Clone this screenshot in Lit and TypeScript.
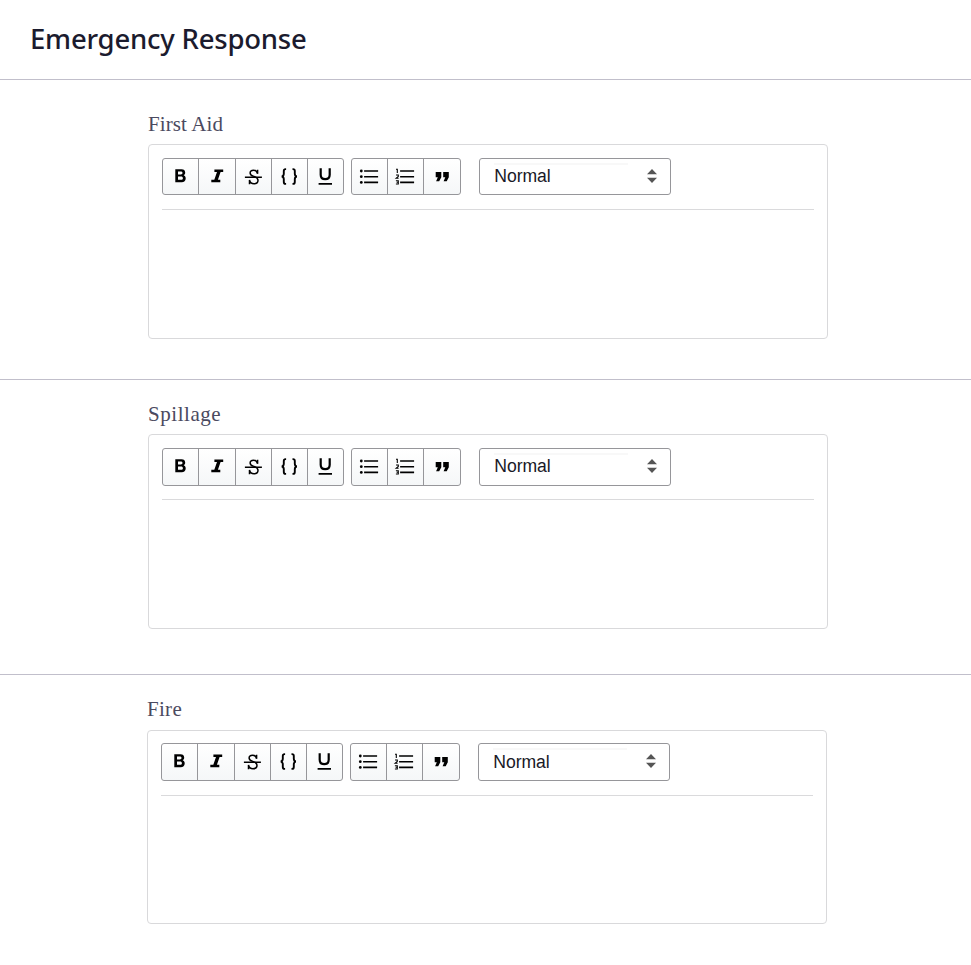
import { LitElement, html, css, svg } from "lit";
import { customElement, property } from "lit/decorators.js";

// Each glyph is drawn on a 36x36 canvas, the size of a toolbar button.
const icons: Record<string, unknown> = {
  bold: svg`<path fill-rule="evenodd" d="M13.300 10.200H19.500c2.300 0 3.700 1.200 3.700 3.400 0 1.300-.6 2.200-1.500 2.700 1.300.5 2 1.600 2 3.100 0 2.400-1.600 3.800-4 3.800h-6.400zM16 12.500v2.900h2.800c1.100 0 1.700-.5 1.700-1.400 0-1-.6-1.500-1.700-1.500zM16 17.500v3.300h3c1.200 0 1.900-.6 1.900-1.600 0-1.100-.7-1.700-1.900-1.700z"/>`,
  italic: svg`<path d="M15.400 10.400h8.800v2.600h-2.600l-2.700 7.800h2.400v2.500h-9v-2.500h3l2.700-7.800h-2.600z"/>`,
  strike: svg`<path d="M9.900 17.600h17v1.300H9.900z"/><path fill="none" stroke="#000" stroke-width="1.500" d="M22.600 10.800v4c-.5-2.200-1.800-3.600-4-3.600-2.100 0-3.500 1-3.500 2.800 0 1.900 1.400 2.700 3.700 3.400 2.900.9 4.200 1.900 4.200 3.900 0 2.200-1.600 3.500-4 3.500-2.500 0-4-1.500-4.500-3.800v4.200"/>`,
  code: svg`<path fill="none" stroke="#000" stroke-width="1.900" d="M15.100 10.100h-.5c-1.300 0-1.800.6-1.800 1.900v2.800c0 1.600-.6 2.400-2 2.700 1.400.3 2 1.100 2 2.700V23c0 1.300.5 1.900 1.800 1.900h.5M21.500 10.100h.5c1.300 0 1.800.6 1.800 1.900v2.800c0 1.600.6 2.400 2 2.700-1.400.3-2 1.100-2 2.700V23c0 1.300-.5 1.900-1.800 1.900h-.5"/>`,
  underline: svg`<path fill="none" stroke="#000" stroke-width="2.200" d="M13.700 9.200v6.600c0 3 1.600 4.400 4.500 4.400s4.500-1.400 4.500-4.400V9.200"/><path d="M11.600 23.900h13.400v1.800H11.600z"/>`,
  bullets: svg`<circle cx="10.300" cy="12" r="1.400"/><circle cx="10.300" cy="17.700" r="1.400"/><circle cx="10.300" cy="23.400" r="1.400"/><path d="M13.100 11.200h14v1.600h-14zM13.100 16.900h14v1.600h-14zM13.100 22.600h14v1.600h-14z"/>`,
  numbers: svg`<path d="M13.100 11.200h14v1.600h-14zM13.100 16.900h14v1.600h-14zM13.100 22.600h14v1.600h-14z"/><path fill="none" stroke="#000" stroke-width="1.100" d="M9 10.300h1.300v3.800M9 16h2.300v1.400L9.200 19.200h2.400M8.900 21.700h2.400v3.300H8.900M9.600 23.300h1.700"/>`,
  quote: svg`<path d="M11.700 13.100h5.600v5.100l-2.100 4h-3.100l1.700-3.900h-2.100zM19.200 13.100h5.600v5.100l-2.100 4h-3.100l1.700-3.900h-2.100z"/>`,
};

@customElement("tool-group")
class ToolGroup extends LitElement {
  @property({ type: Array }) items: string[] = [];

  static styles = css`
    :host {
      display: grid;
      box-sizing: border-box;
      border: 1px solid #96969a;
      border-radius: 3px;
      overflow: hidden;
      background: linear-gradient(#ffffff, #f5f7f8);
    }
    button {
      min-width: 0;
      display: flex;
      align-items: center;
      justify-content: flex-end;
      margin: 0;
      padding: 0;
      border: 0;
      background: none;
    }
    button + button {
      border-left: 1px solid #96969a;
    }
    svg {
      display: block;
      flex: none;
      width: 36px;
      height: 36px;
    }
  `;

  render() {
    return this.items.map(
      (name) => html`<button aria-label=${name}><svg viewBox="0 0 36 36">${icons[name]}</svg></button>`
    );
  }
}

@customElement("rich-editor")
class RichEditor extends LitElement {
  static styles = css`
    :host {
      display: block;
      box-sizing: border-box;
      border: 1px solid #d9d9db;
      border-radius: 4px;
      padding: 13px;
    }
    .toolbar {
      display: flex;
      height: var(--tool-height, 38px);
      padding-bottom: var(--tool-gap, 13px);
      border-bottom: 1px solid #dadadc;
    }
    .marks {
      width: 182px;
      grid-template-columns: 35px 37px 36px 36px 36px;
      margin-right: 7px;
    }
    .blocks {
      width: 110px;
      grid-template-columns: 35px 36px 37px;
      margin-right: 18px;
    }
    .select {
      box-sizing: border-box;
      display: flex;
      justify-content: space-between;
      width: 192px;
      border: 1px solid #96969a;
      border-radius: 3px;
      padding: 4px 13px 0 14px;
    }
    .value {
      box-sizing: border-box;
      width: 134px;
      height: 28px;
      border-top: 2px solid #f8f8f8;
      font: 17.600px/22px "Liberation Sans", Arial, sans-serif;
      line-height: var(--value-line, 22px);
      letter-spacing: -0.050px;
      text-indent: 0.300px;
      color: #191927;
    }
    .select svg {
      display: block;
      width: 10px;
      height: 14px;
      margin-top: 6px;
      fill: #555;
    }
  `;

  render() {
    return html`
      <div class="toolbar">
        <tool-group class="marks" .items=${["bold", "italic", "strike", "code", "underline"]}></tool-group>
        <tool-group class="blocks" .items=${["bullets", "numbers", "quote"]}></tool-group>
        <div class="select">
          <span class="value">Normal</span>
          <svg viewBox="0 0 10 14"><path d="M0 5.200L5 0l5 5.200zM0 8.800h10L5 14z" /></svg>
        </div>
      </div>
    `;
  }
}

@customElement("app-root")
class AppRoot extends LitElement {
  static styles = css`
    :host {
      display: block;
      min-height: 965px;
      background: #fff;
    }
    header {
      box-sizing: border-box;
      height: 80px;
      padding: 19px 30px 0;
      border-bottom: 1px solid #c1bfcb;
    }
    h1 {
      margin: 0;
      font: 500 27.500px/40px "Noto Sans", sans-serif;
      letter-spacing: -0.220px;
      color: #1b1b2e;
    }
    section {
      box-sizing: border-box;
      padding-left: 148px;
      border-bottom: 1px solid #c1bfcb;
    }
    h2 {
      margin: 0;
      font: 400 21px/30px "Liberation Serif", serif;
      letter-spacing: 0.100px;
      color: #4b4a60;
    }
    rich-editor {
      width: 680px;
      height: 195px;
    }
    .aid {
      height: 300px;
      padding-top: 29px;
    }
    .aid h2 {
      height: 35px;
    }
    .aid rich-editor {
      --tool-height: 37px;
      --tool-gap: 14px;
    }
    .spill {
      height: 295px;
      padding-top: 19px;
    }
    .spill h2 {
      height: 35px;
      letter-spacing: 0.550px;
    }
    .fire {
      padding-top: 19px;
      padding-left: 147px;
      border-bottom: 0;
    }
    .fire h2 {
      height: 36px;
      letter-spacing: 0.300px;
    }
    .fire rich-editor {
      --tool-gap: 14px;
      --value-line: 24px;
      height: 194px;
      padding-top: 12px;
    }
  `;

  render() {
    return html`
      <header><h1>Emergency Response</h1></header>
      <section class="aid"><h2>First Aid</h2><rich-editor></rich-editor></section>
      <section class="spill"><h2>Spillage</h2><rich-editor></rich-editor></section>
      <section class="fire"><h2>Fire</h2><rich-editor></rich-editor></section>
    `;
  }
}
